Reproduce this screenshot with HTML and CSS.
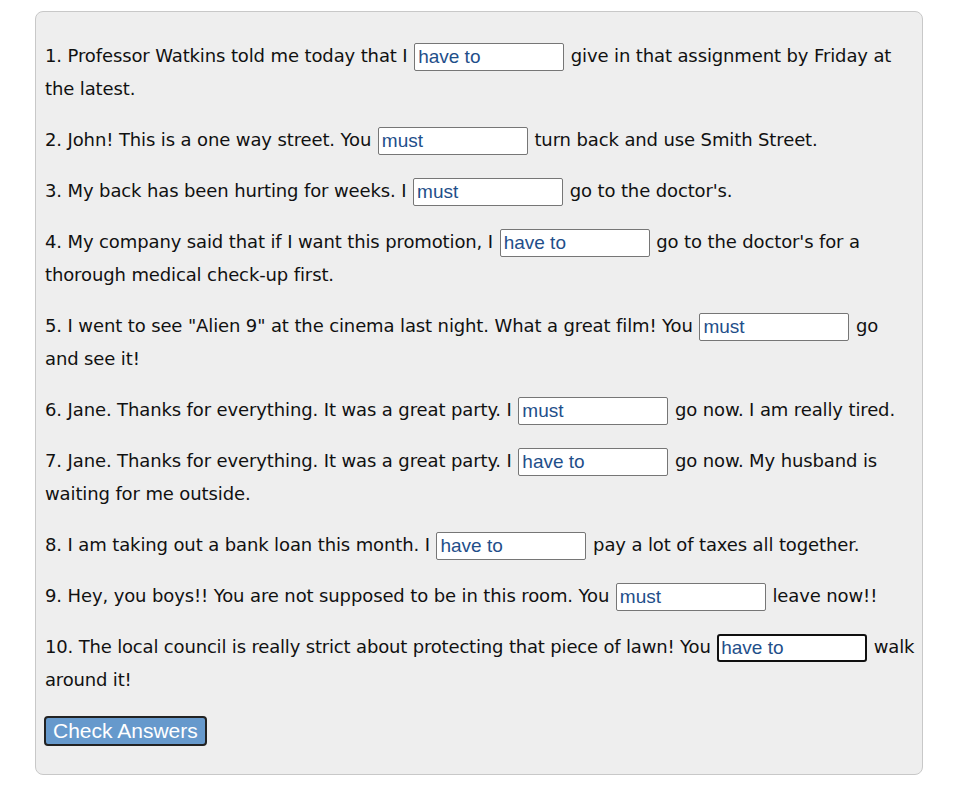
FILE: index.html
```html
<!DOCTYPE html>
<html>
<head>
<meta charset="utf-8">
<link rel="stylesheet" href="styles.css">
</head>
<body>
<div class="quiz">
<p>1. Professor Watkins told me today that I <input class="blank" type="text" value="have to"> give in that assignment by Friday at the latest.</p>
<p>2. John! This is a one way street. You <input class="blank" type="text" value="must"> turn back and use Smith Street.</p>
<p>3. My back has been hurting for weeks. I <input class="blank" type="text" value="must"> go to the doctor's.</p>
<p>4. My company said that if I want this promotion, I <input class="blank" type="text" value="have to"> go to the doctor's for a thorough medical check-up first.</p>
<p>5. I went to see "Alien 9" at the cinema last night. What a great film! You <input class="blank" type="text" value="must"> go and see it!</p>
<p>6. Jane. Thanks for everything. It was a great party. I <input class="blank" type="text" value="must"> go now. I am really tired.</p>
<p>7. Jane. Thanks for everything. It was a great party. I <input class="blank" type="text" value="have to"> go now. My husband is waiting for me outside.</p>
<p>8. I am taking out a bank loan this month. I <input class="blank" type="text" value="have to"> pay a lot of taxes all together.</p>
<p>9. Hey, you boys!! You are not supposed to be in this room. You <input class="blank" type="text" value="must"> leave now!!</p>
<p class="tight">10. The local council is really strict about protecting that piece of lawn! You <input class="blank focused" type="text" value="have to"> walk around it!</p>
<div class="actions"><button class="check" type="button">Check Answers</button></div>
</div>
</body>
</html>
```
FILE: styles.css
```css
html, body {
  margin: 0;
  padding: 0;
  background: #fff;
}
body {
  font-family: "DejaVu Sans", Verdana, sans-serif;
  font-size: 18px;
  color: #111;
}
.quiz {
  box-sizing: border-box;
  width: 888px;
  margin: 11px 0 0 35px;
  padding: 12px 6px 28px 9px;
  background: #eeeeee;
  border: 1px solid #c8c8c8;
  border-radius: 8px;
}
.quiz p {
  margin: 0 0 18px 0;
  line-height: 33px;
  letter-spacing: -0.12px;
}
.quiz p.tight {
  letter-spacing: -0.17px;
}
.quiz p:first-child {
  margin-top: 15px;
}
.blank {
  box-sizing: border-box;
  width: 150px;
  height: 28px;
  padding: 0 3px;
  font-family: "Liberation Sans", Arial, sans-serif;
  font-size: 19px;
  letter-spacing: 0;
  color: #1f4f8a;
  background: #fff;
  border: 1px solid #767676;
  border-radius: 2px;
  vertical-align: middle;
  margin: 0 1px;
}
.blank.focused {
  border: 2px solid #101010;
  border-radius: 3px;
  padding: 0 2px;
}
.actions {
  margin-top: 20px;
}
.check {
  box-sizing: border-box;
  height: 30px;
  padding: 0 7px;
  font-family: "Liberation Sans", Arial, sans-serif;
  font-size: 21px;
  color: #fff;
  background: #6699cc;
  border: 2px solid #222;
  border-radius: 4px;
  margin-left: -1px;
}
```
